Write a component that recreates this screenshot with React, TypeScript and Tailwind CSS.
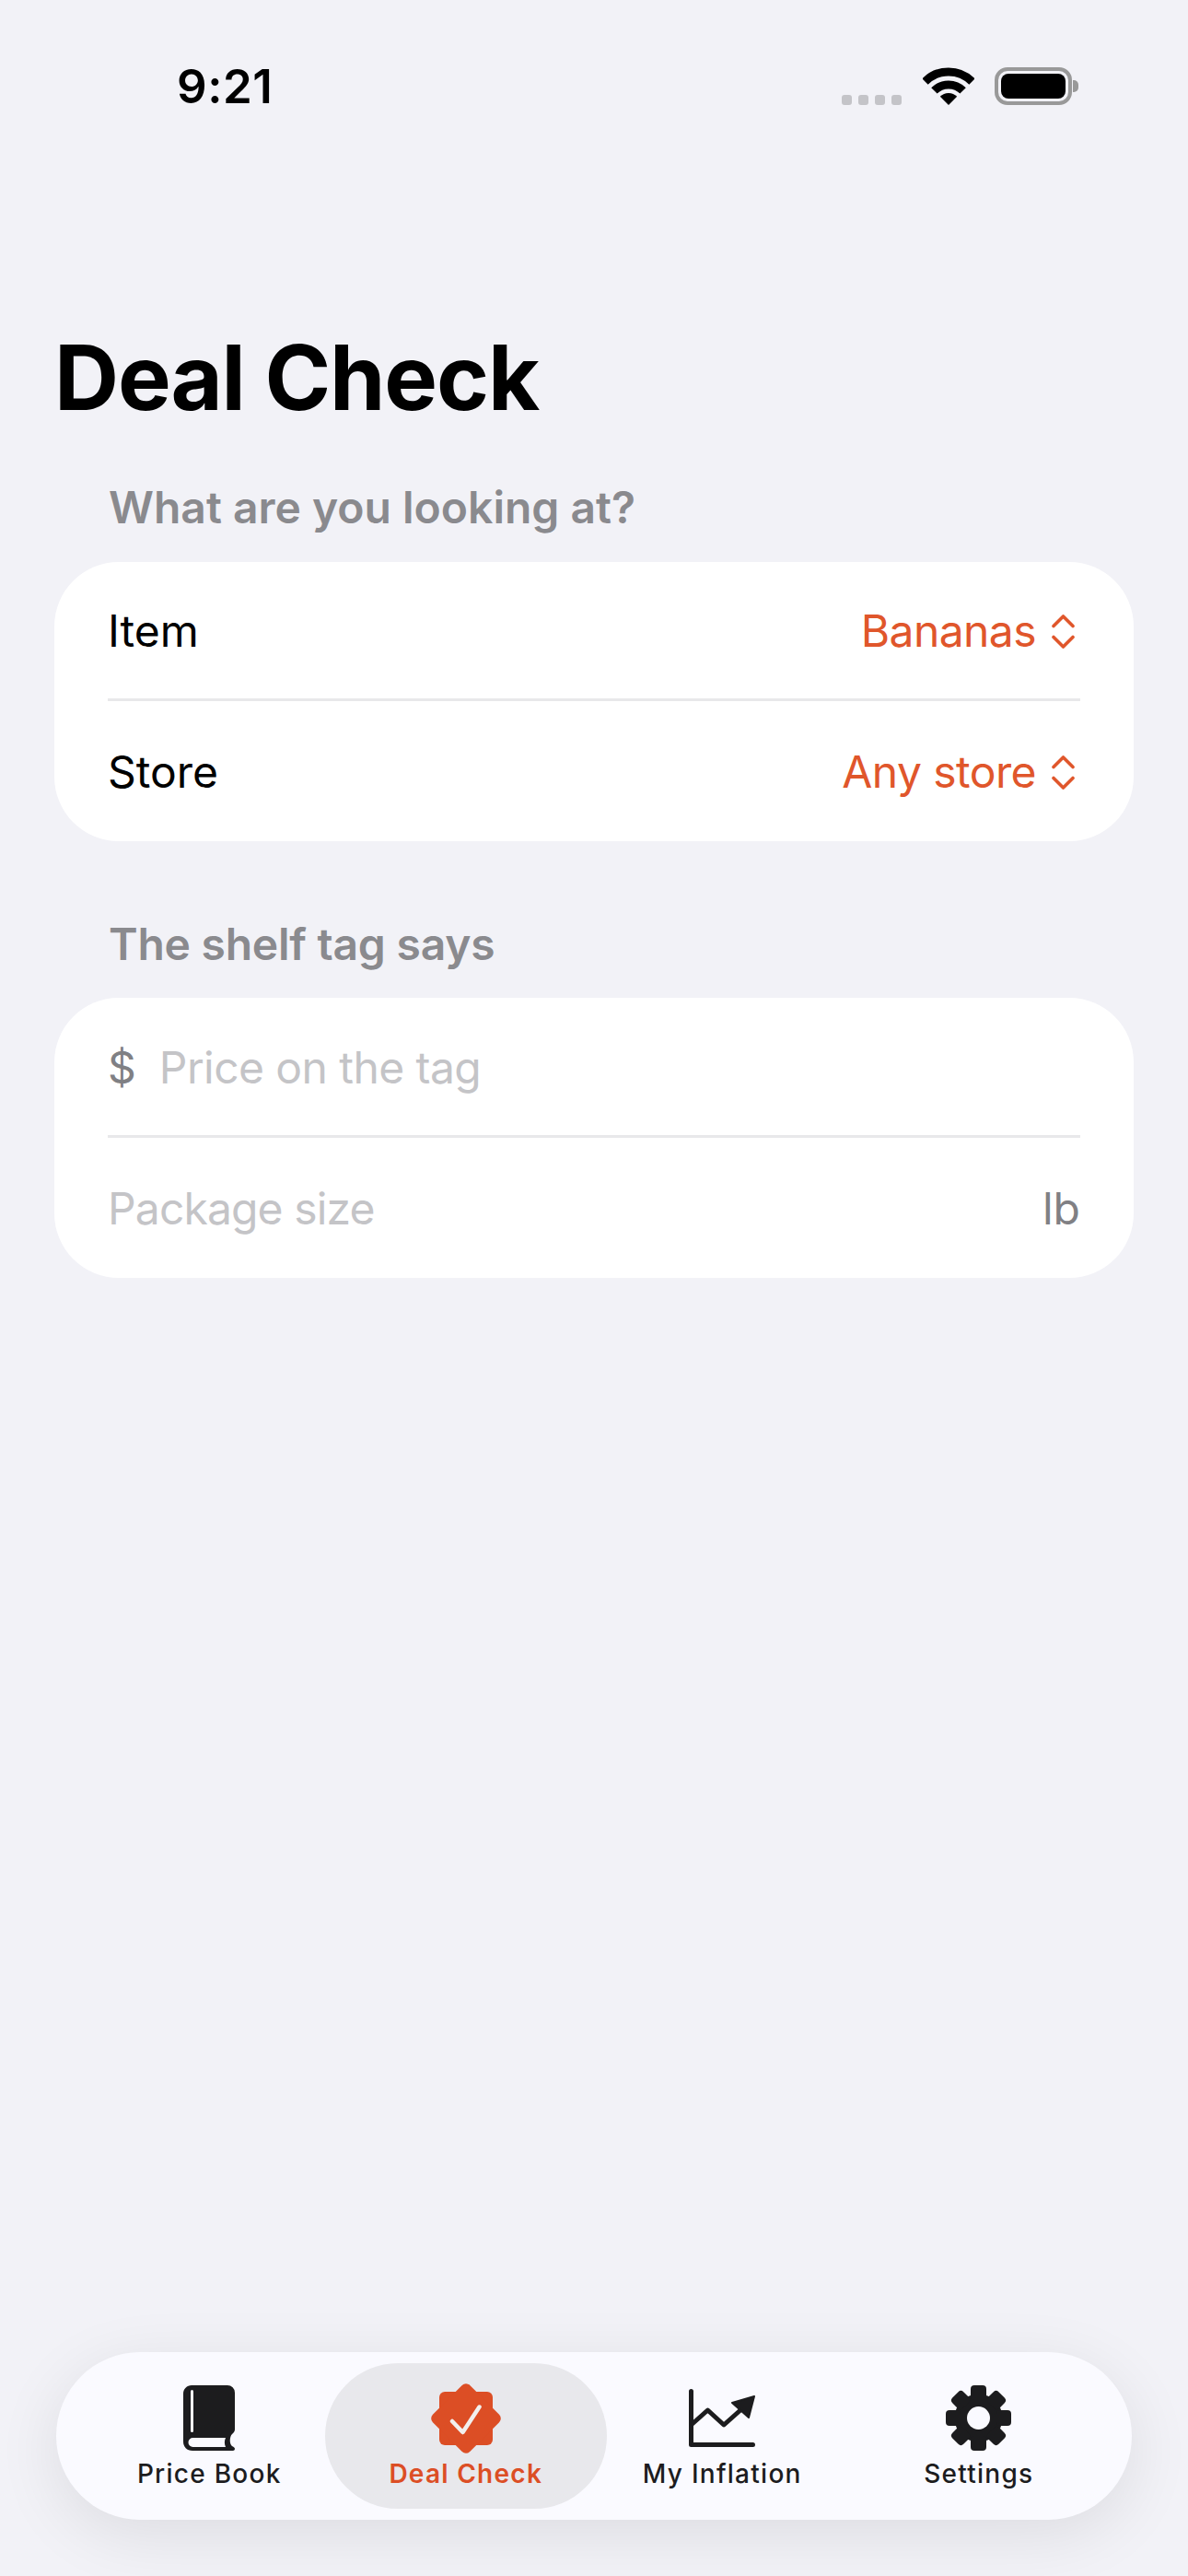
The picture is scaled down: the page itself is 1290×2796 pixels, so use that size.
const Chevrons = () => (
	<svg className="h-[37px] w-[25px] shrink-0" viewBox="0 0 25 37" fill="none" stroke="#e0562b" strokeWidth="3.6" strokeLinecap="round" strokeLinejoin="round">
		<path d="M2 12.500 12.500 2 23 12.500" />
		<path d="M2 24.500 12.500 35 23 24.500" />
	</svg>
);

const BookIcon = () => (
	<svg className="h-[71px] w-[56px]" viewBox="0 0 56 71">
		<path fill="#1c1c1e" d="M9 0H48a8 8 0 0 1 8 8V48c0 2-1 3-3 5-3 3-3 11 0 13 2 1 3 2 3 3 0 1-1 2-2 2H10C4 71 0 67 0 61V9C0 4 4 0 9 0Z" />
		<rect x="8" y="5" width="3" height="46" rx="1.500" fill="#fafaff" />
		<path fill="#fafaff" d="M10.500 57H46c-1.500 3-1.500 7 0 10H10.500a5 5 0 0 1 0-10Z" />
	</svg>
);

const BadgeIcon = () => (
	<svg className="h-[76px] w-[76px]" viewBox="0 0 76 76">
		<rect x="9" y="9" width="58" height="58" rx="6" fill="#dc4e25" />
		<rect x="9.500" y="9.500" width="57" height="57" rx="6" fill="#dc4e25" transform="rotate(45 38 38)" />
		<path d="M23 41 34.500 53 52.500 25.500" fill="none" stroke="#f2f0ee" strokeWidth="4.500" strokeLinecap="round" strokeLinejoin="round" />
	</svg>
);

const ChartIcon = () => (
	<svg className="h-[63px] w-[72px]" viewBox="0 0 72 63">
		<path d="M2.500 2.500V60.500H69.500" fill="none" stroke="#1c1c1e" strokeWidth="5" strokeLinecap="round" strokeLinejoin="round" />
		<path d="M2.500 39 20.500 23 38 39 56 23" fill="none" stroke="#1c1c1e" strokeWidth="5" strokeLinejoin="round" />
		<path d="M71 8 47 15 65 31Z" fill="#1c1c1e" stroke="#1c1c1e" strokeWidth="2" strokeLinejoin="round" />
	</svg>
);

const GearIcon = () => (
	<svg className="h-[71px] w-[71px]" viewBox="0 0 71 71">
		<circle cx="35.500" cy="35.500" r="26" fill="#1c1c1e" />
		{[0, 45, 90, 135, 180, 225, 270, 315].map((deg) => (
			<rect key={deg} x="27" y="0" width="17" height="16" rx="4" fill="#1c1c1e" transform={`rotate(${deg} 35.500 35.500)`} />
		))}
		<circle cx="35.500" cy="35.500" r="12.500" fill="#fafaff" />
	</svg>
);

const tabs = [
	{ label: "Price Book", icon: <BookIcon />, active: false },
	{ label: "Deal Check", icon: <BadgeIcon />, active: true },
	{ label: "My Inflation", icon: <ChartIcon />, active: false },
	{ label: "Settings", icon: <GearIcon />, active: false },
];

function StatusBar() {
	return (
		<div className="flex h-[118px] items-end justify-between pl-[192px] pr-[119px]">
			<span className="mb-[-7px] text-[51px] font-semibold leading-[62px] tracking-[0.01em] text-black">9:21</span>
			<div className="mb-[4px] flex items-end">
				<div className="mr-[23px] flex gap-[7px]">
					<div className="h-[11px] w-[11px] rounded-[3px] bg-[#c4c4c8]" />
					<div className="h-[11px] w-[11px] rounded-[3px] bg-[#c4c4c8]" />
					<div className="h-[11px] w-[11px] rounded-[3px] bg-[#c4c4c8]" />
					<div className="h-[11px] w-[11px] rounded-[3px] bg-[#c4c4c8]" />
				</div>
				<svg className="mr-[22px] h-[41px] w-[56px]" viewBox="0 0 56 41" fill="none" stroke="#000" strokeWidth="9">
					<path d="M2.500 15.500A36 36 0 0 1 53.500 15.500" />
					<path d="M12.400 25.400A22 22 0 0 1 43.600 25.400" />
					<path d="M28 41 18.800 31.800A13 13 0 0 1 37.200 31.800Z" fill="#000" stroke="none" />
				</svg>
				<div className="flex items-center">
					<div className="h-[41px] w-[84px] rounded-[14px] border-[4px] border-[#999] p-[3px]">
						<div className="h-full w-full rounded-[8px] bg-black" />
					</div>
					<div className="ml-[1px] h-[13px] w-[6px] rounded-r-[5px] bg-[#999]" />
				</div>
			</div>
		</div>
	);
}

function PickerRow({ label, value, height }: { label: string; value: string; height: string }) {
	return (
		<div className={`flex items-center justify-between pt-[2px] ${height}`}>
			<span className="text-[48px] text-black">{label}</span>
			<div className="mr-[6px] flex items-center gap-[17px]">
				<span className="text-[48px] tracking-[-0.012em] text-[#e0562b]">{value}</span>
				<Chevrons />
			</div>
		</div>
	);
}

export default function App() {
	return (
		<div className="flex min-h-[2796px] flex-col bg-[#f2f2f7] font-['Inter',sans-serif]">
			<StatusBar />

			<h1 className="ml-[59px] mt-[234px] text-[97px] font-bold leading-[116px] tracking-[-0.012em] text-black">Deal Check</h1>

			<h2 className="ml-[118px] mt-[54px] text-[48px] font-semibold leading-[58px] text-[#8a8a8e]">What are you looking at?</h2>
			<div className="mx-[59px] mt-[30px] rounded-[70px] bg-white px-[58px]">
				<PickerRow label="Item" value="Bananas" height="h-[148px]" />
				<div className="h-[3px] bg-[#e8e8ea]" />
				<PickerRow label="Store" value="Any store" height="h-[152px]" />
			</div>

			<h2 className="ml-[118px] mt-[83px] text-[48px] font-semibold leading-[58px] tracking-[-0.005em] text-[#8a8a8e]">The shelf tag says</h2>
			<div className="mx-[59px] mt-[29px] rounded-[70px] bg-white px-[58px]">
				<div className="flex h-[149px] items-center gap-[25px] pt-[2px]">
					<span className="text-[48px] text-[#808084]">$</span>
					<span className="text-[48px] tracking-[-0.012em] text-[#c4c4c7]">Price on the tag</span>
				</div>
				<div className="h-[3px] bg-[#e8e8ea]" />
				<div className="flex h-[152px] items-center justify-between pt-[2px]">
					<span className="text-[48px] tracking-[-0.018em] text-[#c4c4c7]">Package size</span>
					<span className="text-[48px] text-[#808084]">lb</span>
				</div>
			</div>

			<nav className="mx-[61px] mb-[61px] mt-auto flex h-[182px] items-center rounded-full bg-[#fafaff] px-[27px] shadow-[0_16px_70px_rgba(0,0,0,0.09)]">
				<div className="grid w-full grid-cols-4">
					{tabs.map((tab) => (
						<div
							key={tab.label}
							className={`flex h-[158px] flex-col items-center justify-center rounded-full ${tab.active ? "mx-[-14px] bg-[#e8e8ec]" : ""}`}
						>
							<div className="flex h-[76px] items-center justify-center">{tab.icon}</div>
							<span className={`mt-[5px] text-[28px] leading-[34px] tracking-[0.045em] ${tab.active ? "font-semibold text-[#dc4e25]" : "font-[450] text-[#1c1c1e]"}`}>
								{tab.label}
							</span>
						</div>
					))}
				</div>
			</nav>
		</div>
	);
}
